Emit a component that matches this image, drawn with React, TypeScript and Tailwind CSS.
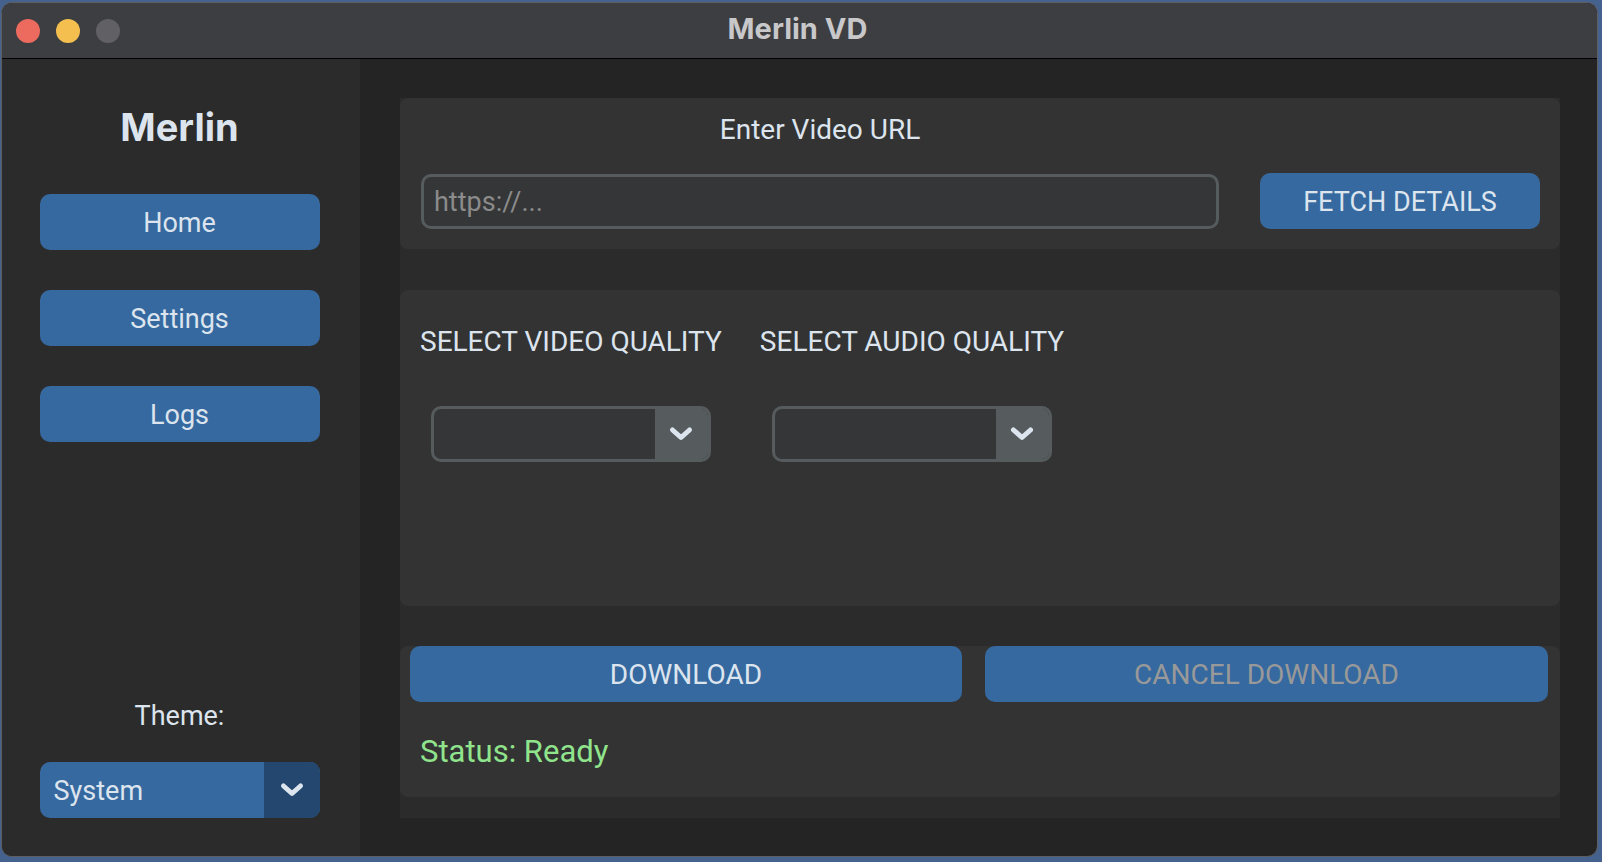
import React from "react";

function Chevron({ color = "#dce4ee" }: { color?: string }) {
  return (
    <svg width="26" height="16" viewBox="0 0 26 16" fill="none">
      <polyline
        points="4.5,4 13,11.5 21.5,4"
        stroke={color}
        strokeWidth="5"
        strokeLinecap="round"
        strokeLinejoin="round"
      />
    </svg>
  );
}

function SideButton({ label }: { label: string }) {
  return (
    <button className="w-[280px] h-[56px] rounded-[10px] bg-[#36699f] text-[#dce4ee] text-[27px] leading-none pt-[2px]">
      {label}
    </button>
  );
}

function QualitySelect() {
  return (
    <div className="w-[280px] h-[56px] rounded-[10px] border-[3px] border-[#565b5e] bg-[#343638] flex overflow-hidden">
      <div className="flex-1" />
      <div className="w-[53px] bg-[#565b5e] flex items-center justify-center">
        <Chevron />
      </div>
    </div>
  );
}

export default function App() {
  return (
    <div className="w-full h-screen bg-[#45628f] pt-[2px] pl-[1px] pr-[4px] pb-[5px] [font-family:Roboto,'Liberation_Sans',sans-serif]">
      <div className="w-full h-full rounded-[11px] border border-[#5e5e60] overflow-hidden flex flex-col bg-[#242424]">
        {/* title bar */}
        <div className="h-[56px] shrink-0 bg-[#3d3e42] border-b border-black flex items-center pl-[14px]">
          <div className="flex gap-[16px]">
            <span className="w-[24px] h-[24px] rounded-full bg-[#ec6a5e]" />
            <span className="w-[24px] h-[24px] rounded-full bg-[#f4bf4f]" />
            <span className="w-[24px] h-[24px] rounded-full bg-[#616165]" />
          </div>
          <div className="flex-1 flex justify-center pr-[122px] pb-[4px]">
            <span className="[font-family:Inter,sans-serif] font-bold text-[29px] text-[#c8c8ca] leading-none">
              Merlin VD
            </span>
          </div>
        </div>

        <div className="flex-1 flex min-h-0">
          {/* sidebar */}
          <div className="w-[358px] shrink-0 bg-[#2b2b2b] flex flex-col items-center pt-[49px] pb-[38px] pr-[3px]">
            <h1 className="[font-family:Inter,sans-serif] font-bold text-[38px] leading-none text-[#dce4ee]">
              Merlin
            </h1>
            <div className="mt-[48px] flex flex-col gap-[40px]">
              <SideButton label="Home" />
              <SideButton label="Settings" />
              <SideButton label="Logs" />
            </div>
            <div className="mt-auto flex flex-col items-center">
              <span className="text-[27px] leading-none text-[#dce4ee]">Theme:</span>
              <div className="mt-[32px] w-[280px] h-[56px] rounded-[10px] bg-[#36699f] flex overflow-hidden">
                <div className="flex-1 flex items-center pl-[14px] pt-[3px] text-[27px] text-[#dce4ee]">
                  System
                </div>
                <div className="w-[56px] bg-[#24476f] flex items-center justify-center">
                  <Chevron />
                </div>
              </div>
            </div>
          </div>

          {/* main */}
          <div className="flex-1 flex flex-col pl-[40px] pr-[37px] pt-[39px] pb-[38px]">
            <div className="flex-1 bg-[#2b2b2b] flex flex-col pb-[21px]">
              {/* url card */}
              <div className="h-[151px] rounded-[8px] bg-[#333333] flex items-end gap-[41px] pl-[21px] pr-[20px] pb-[20px]">
                <div className="flex flex-col items-center">
                  <span className="text-[28px] leading-none text-[#dce4ee] mb-[30px]">Enter Video URL</span>
                  <input
                    readOnly
                    placeholder="https://..."
                    className="w-[798px] h-[55px] rounded-[10px] border-[3px] border-[#565b5e] bg-[#343638] pl-[10px] text-[27px] text-[#dce4ee] placeholder:text-[#8b8b8b] outline-none"
                  />
                </div>
                <button className="w-[280px] h-[56px] rounded-[10px] bg-[#36699f] text-[#dce4ee] text-[27px] leading-none pt-[3px]">
                  FETCH DETAILS
                </button>
              </div>

              {/* quality card */}
              <div className="mt-[41px] h-[316px] rounded-[8px] bg-[#333333] flex gap-[38px] pl-[20px] pt-[38px]">
                <div className="flex flex-col items-center">
                  <span className="text-[28px] leading-none text-[#dce4ee]">SELECT VIDEO QUALITY</span>
                  <div className="mt-[50px]">
                    <QualitySelect />
                  </div>
                </div>
                <div className="flex flex-col items-center">
                  <span className="text-[28px] leading-none text-[#dce4ee]">SELECT AUDIO QUALITY</span>
                  <div className="mt-[50px]">
                    <QualitySelect />
                  </div>
                </div>
              </div>

              {/* download card */}
              <div className="mt-[40px] h-[151px] rounded-[8px] bg-[#333333] flex flex-col pl-[10px] pr-[12px]">
                <div className="flex gap-[23px]">
                  <button className="w-[552px] h-[56px] rounded-[10px] bg-[#36699f] text-[#dce4ee] text-[28px] leading-none pt-[2px]">
                    DOWNLOAD
                  </button>
                  <button className="flex-1 h-[56px] rounded-[10px] bg-[#36699f] text-[#999999] text-[28px] leading-none pt-[2px]">
                    CANCEL DOWNLOAD
                  </button>
                </div>
                <span className="mt-[34px] pl-[10px] text-[31px] leading-none text-[#90e48c]">Status: Ready</span>
              </div>
            </div>
          </div>
        </div>
      </div>
    </div>
  );
}
